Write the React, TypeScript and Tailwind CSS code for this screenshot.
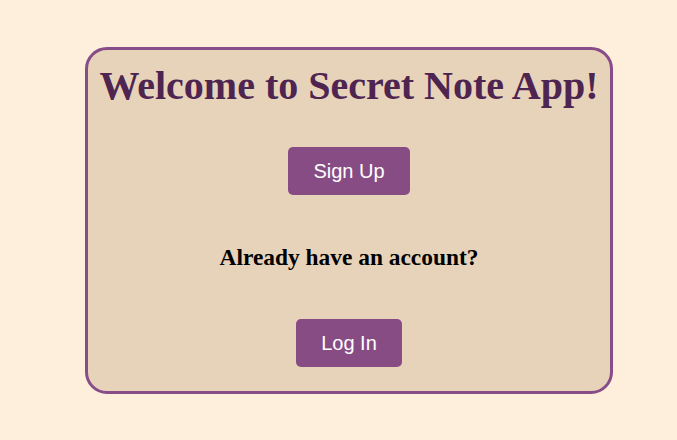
import React from 'react';

const App: React.FC = () => {
    return (
        <div className="min-h-[440px] w-full bg-[#fdefdc] pt-[47px]">
            <div className="ml-[85px] flex w-[528px] flex-col items-center rounded-[22px] border-[3px] border-[#884c88] bg-[#e7d3b9] pt-[13px] pb-[24px]">
                <h1 className="whitespace-nowrap font-['Liberation_Serif',serif] text-[40px] font-bold leading-[46px] text-[#4e2450]">
                    Welcome to Secret Note App!
                </h1>
                <button className="mt-[38px] rounded-[5px] bg-[#884c85] px-[25px] py-[12px] font-['Liberation_Sans',sans-serif] text-[20px] leading-[24px] text-white">
                    Sign Up
                </button>
                <p className="mt-[48px] font-['Liberation_Serif',serif] text-[23.4px] font-bold leading-[28px] text-black">
                    Already have an account?
                </p>
                <button className="mt-[48px] rounded-[5px] bg-[#884c85] px-[25px] py-[12px] font-['Liberation_Sans',sans-serif] text-[20px] leading-[24px] text-white">
                    Log In
                </button>
            </div>
        </div>
    );
};

export default App;
